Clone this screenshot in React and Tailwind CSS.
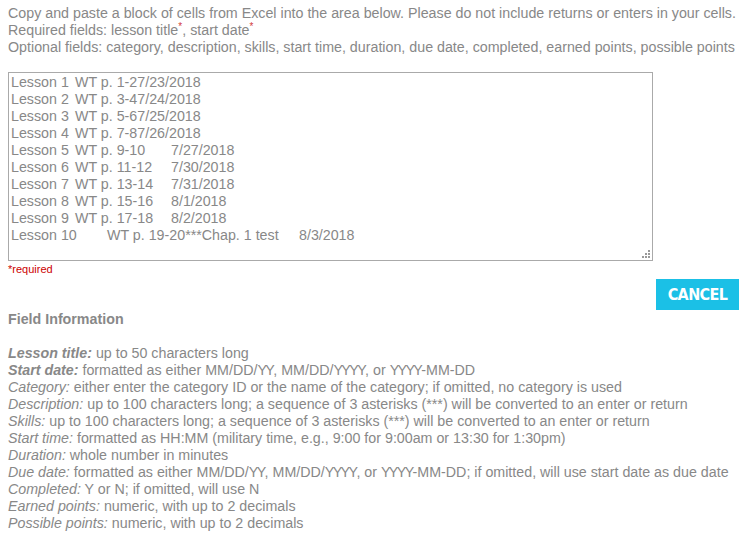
import React from 'react'

const lessons = [
  "Lesson 1\tWT p. 1-27/23/2018",
  "Lesson 2\tWT p. 3-47/24/2018",
  "Lesson 3\tWT p. 5-67/25/2018",
  "Lesson 4\tWT p. 7-87/26/2018",
  "Lesson 5\tWT p. 9-10\t7/27/2018",
  "Lesson 6\tWT p. 11-12\t7/30/2018",
  "Lesson 7\tWT p. 13-14\t7/31/2018",
  "Lesson 8\tWT p. 15-16\t8/1/2018",
  "Lesson 9\tWT p. 17-18\t8/2/2018",
  "Lesson 10\tWT p. 19-20***Chap. 1 test\t8/3/2018",
].join("\n")

const fields = [
  { label: "Lesson title", text: "up to 50 characters long", bold: true },
  { label: "Start date", text: "formatted as either MM/DD/YY, MM/DD/YYYY, or YYYY-MM-DD", bold: true },
  { label: "Category", text: "either enter the category ID or the name of the category; if omitted, no category is used" },
  { label: "Description", text: "up to 100 characters long; a sequence of 3 asterisks (***) will be converted to an enter or return" },
  { label: "Skills", text: "up to 100 characters long; a sequence of 3 asterisks (***) will be converted to an enter or return" },
  { label: "Start time", text: "formatted as HH:MM (military time, e.g., 9:00 for 9:00am or 13:30 for 1:30pm)" },
  { label: "Duration", text: "whole number in minutes" },
  { label: "Due date", text: "formatted as either MM/DD/YY, MM/DD/YYYY, or YYYY-MM-DD; if omitted, will use start date as due date" },
  { label: "Completed", text: "Y or N; if omitted, will use N" },
  { label: "Earned points", text: "numeric, with up to 2 decimals" },
  { label: "Possible points", text: "numeric, with up to 2 decimals" },
]

// the Y runs sit tighter in the original rendering
const tightY = (text) =>
  text.split(/(YY+)/).map((part, i) =>
    /^YY+$/.test(part) ? <span key={i} className="tracking-[-1.6px]">{part}</span> : part
  )

export default function App() {
  return (
    <div className="w-[749px] h-[537px] bg-white text-[#888888] text-[14.25px] leading-[17px] font-['Liberation_Sans',Arial,sans-serif] px-2 pt-[5px]">
      <p>Copy and paste a block of cells from Excel into the area below. Please do not include returns or enters in your cells.</p>
      <p>
        Required fields: lesson title<sup className="text-[#d23c3c] text-[10px]">*</sup>, start date<sup className="text-[#d23c3c] text-[10px]">*</sup>
      </p>
      <p>Optional fields: category, description, skills, start time, duration, due date, completed, earned points, possible points</p>

      <div className="relative mt-[16px] w-[645px] h-[189px]">
        <textarea
          className="block w-full h-full border border-[#aaaaaa] px-[2px] py-[1px] text-[14.25px] leading-[17px] text-[#888888] font-['Liberation_Sans',Arial,sans-serif] [tab-size:32px] outline-none resize-none"
          defaultValue={lessons}
        />
        <div className="absolute right-[3px] bottom-[3px] grid grid-cols-3 gap-[1px] w-[8px] h-[8px]">
          <span />
          <span />
          <span className="w-[2px] h-[2px] bg-[#999]" />
          <span />
          <span className="w-[2px] h-[2px] bg-[#999]" />
          <span className="w-[2px] h-[2px] bg-[#999]" />
          <span className="w-[2px] h-[2px] bg-[#999]" />
          <span className="w-[2px] h-[2px] bg-[#999]" />
          <span className="w-[2px] h-[2px] bg-[#999]" />
        </div>
      </div>
      <p className="text-[#cc0000] text-[11px] leading-[13px] mt-[2px]">*required</p>

      <div className="flex justify-end mr-[2px] mt-[3px]">
        <button className="bg-[#1bc0e6] text-white font-bold text-[16px] leading-[31px] h-[31px] w-[83px] font-['DejaVu_Sans_Condensed','Liberation_Sans',sans-serif] tracking-[-0.6px]">
          CANCEL
        </button>
      </div>

      <p className="font-bold mt-[1px]">Field Information</p>

      <div className="mt-[17px]">
        {fields.map((f, i) => (
          <p key={i}>
            <span className={f.bold ? "italic font-bold" : "italic"}>{f.label}:</span> {tightY(f.text)}
          </p>
        ))}
      </div>
    </div>
  )
}
